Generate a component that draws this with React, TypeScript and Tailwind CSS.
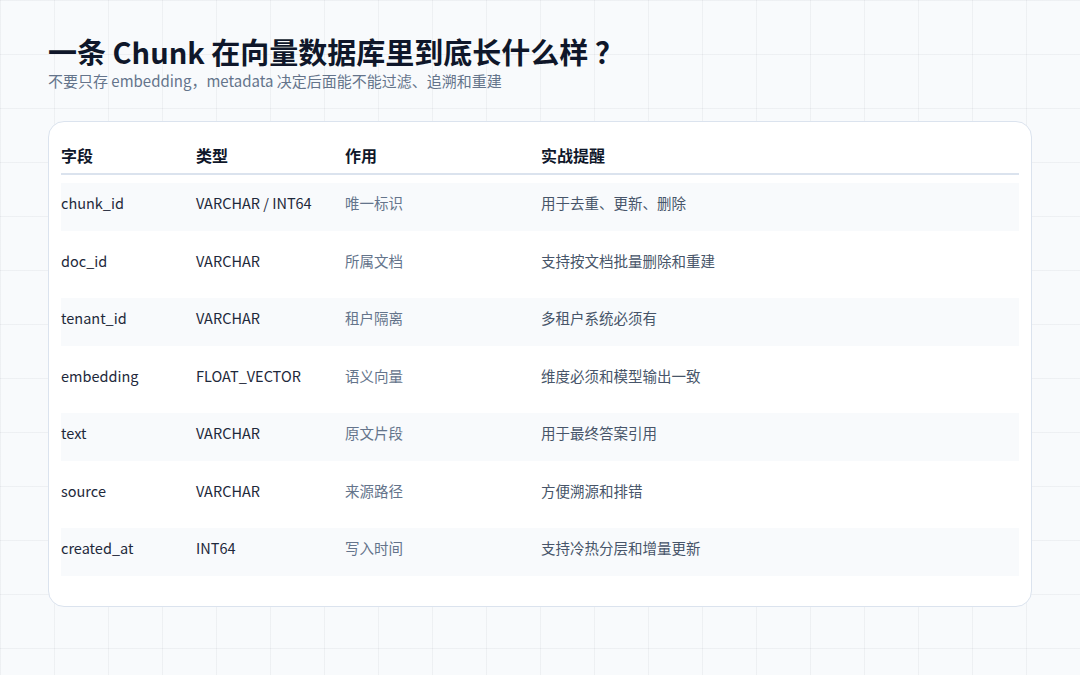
import React from "react";

const rows = [
  ["chunk_id", "VARCHAR / INT64", "唯一标识", "用于去重、更新、删除"],
  ["doc_id", "VARCHAR", "所属文档", "支持按文档批量删除和重建"],
  ["tenant_id", "VARCHAR", "租户隔离", "多租户系统必须有"],
  ["embedding", "FLOAT_VECTOR", "语义向量", "维度必须和模型输出一致"],
  ["text", "VARCHAR", "原文片段", "用于最终答案引用"],
  ["source", "VARCHAR", "来源路径", "方便溯源和排错"],
  ["created_at", "INT64", "写入时间", "支持冷热分层和增量更新"],
];

export default function App() {
  return (
    <div
      className="w-[1080px] h-[675px] bg-[#f8fafc] overflow-hidden px-[48px] pt-[33px]"
      style={{
        fontFamily: '"Noto Sans CJK SC", "Noto Sans", sans-serif',
        backgroundImage:
          "linear-gradient(to right, rgba(15,23,42,0.045) 1px, transparent 1px), linear-gradient(to bottom, rgba(15,23,42,0.045) 1px, transparent 1px)",
        backgroundSize: "54px 54px",
      }}
    >
      <h1 className="text-[29px] leading-[37px] font-bold text-[#0f172a]">一条 Chunk 在向量数据库里到底长什么样 ？</h1>
      <p className="text-[15px] leading-[22px] text-[#64748b]">不要只存 embedding，metadata 决定后面能不能过滤、追溯和重建</p>
      <div className="mt-[29px] w-[984px] h-[486px] bg-white border border-[#dbe3ee] rounded-[16px] px-[12px] pt-[18px]">
        <div className="flex items-center h-[30px] text-[16px] font-bold text-[#0f172a] border-b-2 border-[#dbe3ee] box-content pb-[3px]">
          <div className="w-[135px]">字段</div>
          <div className="w-[149px]">类型</div>
          <div className="w-[196px]">作用</div>
          <div>实战提醒</div>
        </div>
        <div className="flex flex-col gap-[10px] mt-[8px]">
          {rows.map((r, i) => (
            <div
              key={i}
              className={`flex items-center h-[47.5px] pb-[7px] text-[14.5px] ${i % 2 === 0 ? "bg-[#f8fafc]" : ""}`}
            >
              <div className="w-[135px] text-[#1e293b]">{r[0]}</div>
              <div className="w-[149px] text-[#1e293b]">{r[1]}</div>
              <div className="w-[196px] text-[#64748b]">{r[2]}</div>
              <div className="text-[#475569]">{r[3]}</div>
            </div>
          ))}
        </div>
      </div>
    </div>
  );
}
